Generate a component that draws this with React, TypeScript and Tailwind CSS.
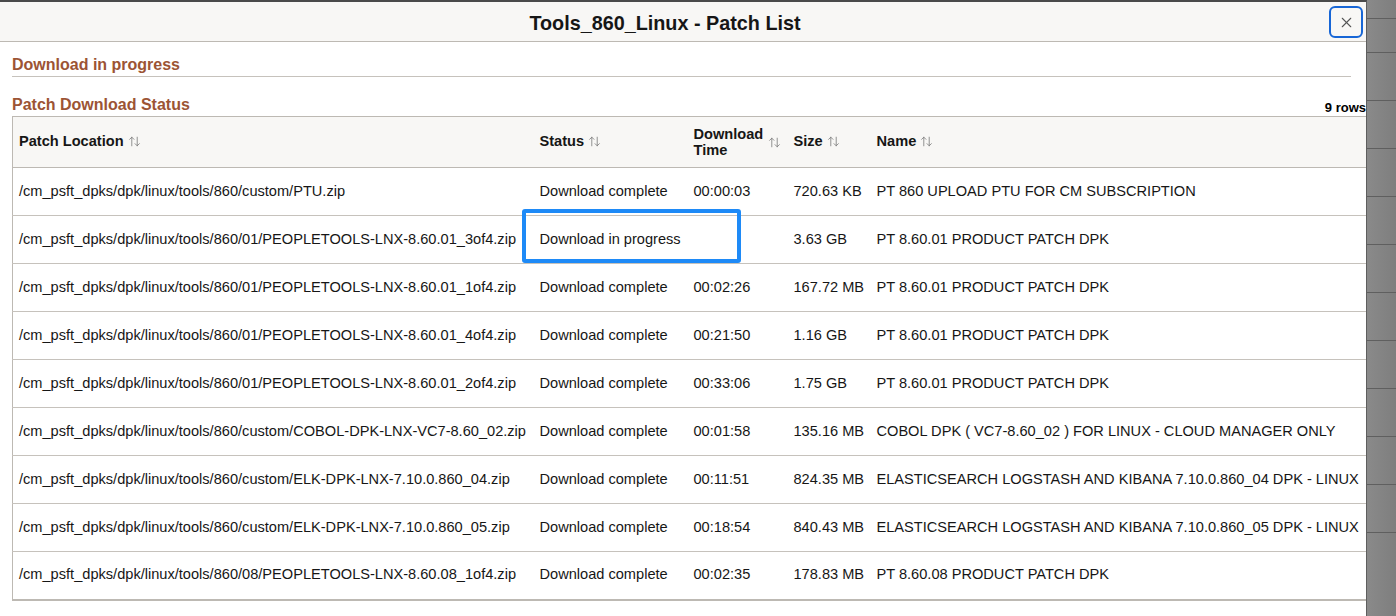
import { ArrowUpDown, X } from 'lucide-react';

interface PatchRow {
    location: string;
    status: string;
    time: string;
    size: string;
    name: string;
}

const rows: PatchRow[] = [
    { location: '/cm_psft_dpks/dpk/linux/tools/860/custom/PTU.zip', status: 'Download complete', time: '00:00:03', size: '720.63 KB', name: 'PT 860 UPLOAD PTU FOR CM SUBSCRIPTION' },
    { location: '/cm_psft_dpks/dpk/linux/tools/860/01/PEOPLETOOLS-LNX-8.60.01_3of4.zip', status: 'Download in progress', time: '', size: '3.63 GB', name: 'PT 8.60.01 PRODUCT PATCH DPK' },
    { location: '/cm_psft_dpks/dpk/linux/tools/860/01/PEOPLETOOLS-LNX-8.60.01_1of4.zip', status: 'Download complete', time: '00:02:26', size: '167.72 MB', name: 'PT 8.60.01 PRODUCT PATCH DPK' },
    { location: '/cm_psft_dpks/dpk/linux/tools/860/01/PEOPLETOOLS-LNX-8.60.01_4of4.zip', status: 'Download complete', time: '00:21:50', size: '1.16 GB', name: 'PT 8.60.01 PRODUCT PATCH DPK' },
    { location: '/cm_psft_dpks/dpk/linux/tools/860/01/PEOPLETOOLS-LNX-8.60.01_2of4.zip', status: 'Download complete', time: '00:33:06', size: '1.75 GB', name: 'PT 8.60.01 PRODUCT PATCH DPK' },
    { location: '/cm_psft_dpks/dpk/linux/tools/860/custom/COBOL-DPK-LNX-VC7-8.60_02.zip', status: 'Download complete', time: '00:01:58', size: '135.16 MB', name: 'COBOL DPK ( VC7-8.60_02 ) FOR LINUX - CLOUD MANAGER ONLY' },
    { location: '/cm_psft_dpks/dpk/linux/tools/860/custom/ELK-DPK-LNX-7.10.0.860_04.zip', status: 'Download complete', time: '00:11:51', size: '824.35 MB', name: 'ELASTICSEARCH LOGSTASH AND KIBANA 7.10.0.860_04 DPK - LINUX' },
    { location: '/cm_psft_dpks/dpk/linux/tools/860/custom/ELK-DPK-LNX-7.10.0.860_05.zip', status: 'Download complete', time: '00:18:54', size: '840.43 MB', name: 'ELASTICSEARCH LOGSTASH AND KIBANA 7.10.0.860_05 DPK - LINUX' },
    { location: '/cm_psft_dpks/dpk/linux/tools/860/08/PEOPLETOOLS-LNX-8.60.08_1of4.zip', status: 'Download complete', time: '00:02:35', size: '178.83 MB', name: 'PT 8.60.08 PRODUCT PATCH DPK' },
];

function SortIcon() {
    return <ArrowUpDown className="w-[13px] h-[13px] text-[#7a7a7a] shrink-0" strokeWidth={1.5} />;
}

export default function App() {
    return (
        <div className="flex w-[1396px] h-[616px] overflow-hidden bg-[#858585] text-black" style={{ fontFamily: '"Liberation Sans", Arial, sans-serif' }}>
            {/* Modal */}
            <div className="w-[1367px] h-full shrink-0 flex flex-col bg-white border-t-2 border-t-[#4a4a4a] border-r border-r-[#5e5e5e]">
                {/* Title bar */}
                <div className="relative h-[40px] shrink-0 flex items-center justify-center pr-[36px] pt-[3px] bg-[#f8f7f5] border-b border-[#bdb9b3]">
                    <h1 className="text-[19.8px] leading-[22px] font-bold text-[#161616]">Tools_860_Linux - Patch List</h1>
                    <button className="absolute right-[3px] top-[4px] w-[34px] h-[32px] flex items-center justify-center rounded-[6px] border-2 border-[#1766d6] bg-[#f8f7f5]">
                        <X className="w-[17px] h-[17px] text-[#555]" strokeWidth={1.5} />
                    </button>
                </div>

                {/* Body */}
                <div className="pl-[12px] pt-[14px]">
                    <div className="mr-[15px] border-b border-[#c6c2bc] pb-[2px]">
                        <h2 className="text-[16px] leading-[18px] font-bold text-[#9c5434]">Download in progress</h2>
                    </div>

                    <div className="h-[39px] flex items-end justify-between">
                        <h2 className="pb-[2px] text-[16px] leading-[18px] font-bold text-[#9c5434]">Patch Download Status</h2>
                        <span className="pb-[1px] text-[13px] leading-[14px] font-bold">9 rows</span>
                    </div>

                    {/* Table */}
                    <div className="relative">
                        <table className="w-[1354px] table-fixed border-collapse text-[14.6px] text-[#161616]">
                            <colgroup>
                                <col className="w-[521px]" />
                                <col className="w-[154px]" />
                                <col className="w-[100px]" />
                                <col className="w-[83px]" />
                                <col />
                            </colgroup>
                            <thead>
                                <tr className="h-[51px] bg-[#f8f7f5] border-t border-l border-b border-[#bdb9b3]">
                                    <th className="pl-[6px] pr-[7px] text-left font-bold">
                                        <div className="flex items-center gap-[4px]">Patch Location <SortIcon /></div>
                                    </th>
                                    <th className="pl-[6px] pr-[7px] text-left font-bold">
                                        <div className="flex items-center gap-[4px]">Status <SortIcon /></div>
                                    </th>
                                    <th className="pl-[6px] pr-[7px] text-left font-bold">
                                        <div className="flex items-center justify-between">
                                            <span className="leading-[16px]">Download<br />Time</span>
                                            <SortIcon />
                                        </div>
                                    </th>
                                    <th className="pl-[6px] pr-[7px] text-left font-bold">
                                        <div className="flex items-center gap-[4px]">Size <SortIcon /></div>
                                    </th>
                                    <th className="pl-[6px] pr-[7px] text-left font-bold">
                                        <div className="flex items-center gap-[4px]">Name <SortIcon /></div>
                                    </th>
                                </tr>
                            </thead>
                            <tbody>
                                {rows.map((row, i) => (
                                    <tr
                                        key={i}
                                        className={`h-[48px] border-l border-[#bdb9b3] ${i === rows.length - 1 ? 'border-b-2 border-b-[#bdb9b3]' : 'border-b border-b-[#c6c2bc]'}`}
                                    >
                                        <td className="pl-[6px] pr-[7px] whitespace-nowrap">{row.location}</td>
                                        <td className="pl-[6px] pr-[7px] whitespace-nowrap">{row.status}</td>
                                        <td className="pl-[6px] pr-[7px] whitespace-nowrap">{row.time}</td>
                                        <td className="pl-[6px] pr-[7px] whitespace-nowrap">{row.size}</td>
                                        <td className="pl-[6px] pr-[7px] whitespace-nowrap">{row.name}</td>
                                    </tr>
                                ))}
                            </tbody>
                        </table>

                        {/* Highlight box over the in-progress status */}
                        <div className="absolute left-[510px] top-[93px] w-[219px] h-[54px] rounded-[3px] border-[4px] border-[#1e8af7] pointer-events-none" />
                    </div>
                </div>
            </div>

            {/* Backdrop strip on the right */}
            <div className="flex-1 flex flex-col bg-gradient-to-r from-[#8a8a8a] to-[#7e7e7e]">
                <div className="h-[19px] shrink-0 border-b border-[#5f5f5f]" />
                <div className="h-[34px] shrink-0 border-b border-[#5f5f5f]" />
                {Array.from({ length: 10 }).map((_, i) => (
                    <div key={i} className="h-[48px] shrink-0 border-b border-[#5f5f5f]" />
                ))}
            </div>
        </div>
    );
}
